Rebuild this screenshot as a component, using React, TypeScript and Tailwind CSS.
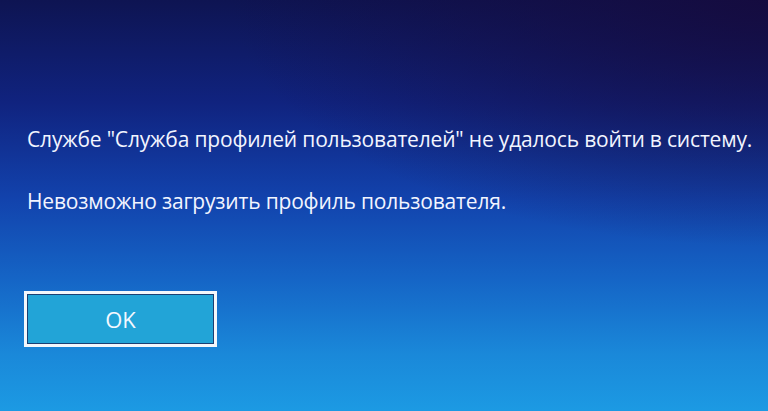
import React from "react";

export default function App() {
  return (
    <div className="relative h-[411px] w-full overflow-hidden bg-[radial-gradient(ellipse_70%_60%_at_100%_0%,rgba(22,10,60,0.85),rgba(22,10,60,0)_100%),linear-gradient(180deg,#0e1452_0%,#10237f_25%,#1242ac_48%,#1565c6_68%,#1a88d9_86%,#1c9ae3_100%)] font-['Open_Sans','Noto_Sans',sans-serif] text-[#f2f5ff]">
      <div className="flex flex-col pl-[27px] pt-[125px]">
        <p className="text-[21px] font-medium leading-[28px] tracking-[-0.18px] whitespace-nowrap">
          Службе "Служба профилей пользователей" не удалось войти в систему.
        </p>
        <p className="mt-[34px] text-[21px] font-medium leading-[28px] tracking-[-0.18px] whitespace-nowrap">
          Невозможно загрузить профиль пользователя.
        </p>
        <div className="mt-[76px] -ml-[3px] w-[193px] h-[56px] border-[3px] border-[#f4f7fb]">
          <div className="flex h-full w-full items-center justify-center border border-[#1b3f73] bg-[#22a4d7] text-[22px] font-medium text-[#f4f8ff]">
            OK
          </div>
        </div>
      </div>
    </div>
  );
}
